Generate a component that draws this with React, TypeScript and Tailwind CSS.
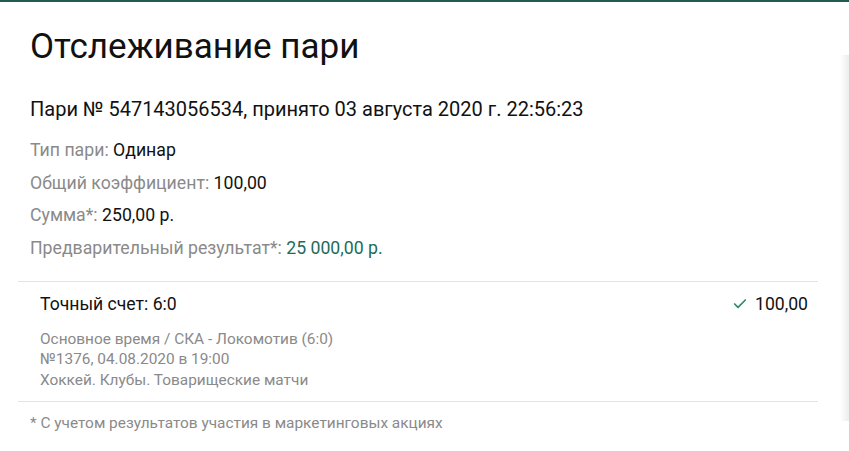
import React from 'react'
import { Check } from 'lucide-react'

const rows = [
  { label: 'Тип пари:', value: 'Одинар' },
  { label: 'Общий коэффициент:', value: '100,00' },
  { label: 'Сумма*:', value: '250,00 р.' },
  { label: 'Предварительный результат*:', value: '25 000,00 р.', accent: true },
]

export default function App() {
  return (
    <div className="flex h-[451px] w-[849px] overflow-hidden border-t-2 border-[#1f5b4f] bg-white font-['Roboto',sans-serif]">
      <div className="flex-1 pl-[18px] pr-[22px]">
        <h1 className="pl-3 pt-[18px] text-[35px] leading-[54px] text-[#111]">Отслеживание пари</h1>

        <div className="mt-[23px] pl-3 text-[20px] leading-[24px] text-[#111]">
          Пари № 547143056534, принято 03 августа 2020 г. 22:56:23
        </div>

        <div className="mt-[13px] flex flex-col pl-3">
          {rows.map((r) => (
            <div key={r.label} className="text-[17.7px] leading-[32.7px] text-[#8a8a8a]">
              {r.label}{' '}
              <span className={r.accent ? 'text-[#1e6b57]' : 'text-[#111]'}>{r.value}</span>
            </div>
          ))}
        </div>

        {/* Ставка */}
        <div className="mt-[16px] border-y border-[#e3e3e3] pb-[11px] pl-[22px] pr-[10px] pt-[10px]">
          <div className="flex items-center justify-between text-[17.6px] leading-[24px] text-[#111]">
            <span>Точный счет: 6:0</span>
            <span className="flex items-center gap-[7px]">
              <Check className="h-4 w-4 text-[#2b8a6c]" strokeWidth={2.5} />
              100,00
            </span>
          </div>
          <div className="mt-[13px] text-[15.4px] leading-[20.5px] text-[#8a8a8a]">
            <div>Основное время / СКА - Локомотив (6:0)</div>
            <div>№1376, 04.08.2020 в 19:00</div>
            <div>Хоккей. Клубы. Товарищеские матчи</div>
          </div>
        </div>

        <div className="mt-[10px] pl-3 text-[15.4px] leading-[22px] text-[#8a8a8a]">
          * С учетом результатов участия в маркетинговых акциях
        </div>
      </div>

      <div className="mt-[53px] mb-[30px] w-[9px] bg-gradient-to-r from-white to-[#ececec]" />
    </div>
  )
}
